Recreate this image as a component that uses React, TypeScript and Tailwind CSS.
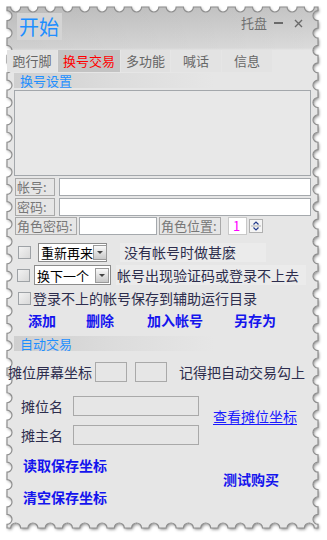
import React from "react";

const FONT = "font-['Noto_Sans_CJK_SC','Noto_Sans',sans-serif]";

// stamp-style frame: straight edges with round bites cut in
function stampPath(x0: number, y0: number, w: number, h: number, r: number, step: number) {
  const nx = Math.round(w / step);
  const ny = Math.round(h / step);
  const sx = w / nx;
  const sy = h / ny;
  const x1 = x0 + w;
  const y1 = y0 + h;
  let d = `M${x0},${y0}`;
  for (let i = 0; i < nx; i++) {
    const c = x0 + sx * (i + 0.5);
    d += ` L${c - r},${y0} A${r},${r} 0 0 0 ${c + r},${y0}`;
  }
  d += ` L${x1},${y0}`;
  for (let i = 0; i < ny; i++) {
    const c = y0 + sy * (i + 0.5);
    d += ` L${x1},${c - r} A${r},${r} 0 0 0 ${x1},${c + r}`;
  }
  d += ` L${x1},${y1}`;
  for (let i = nx - 1; i >= 0; i--) {
    const c = x0 + sx * (i + 0.5);
    d += ` L${c + r},${y1} A${r},${r} 0 0 0 ${c - r},${y1}`;
  }
  d += ` L${x0},${y1}`;
  for (let i = ny - 1; i >= 0; i--) {
    const c = y0 + sy * (i + 0.5);
    d += ` L${x0},${c + r} A${r},${r} 0 0 0 ${x0},${c - r}`;
  }
  return d + " Z";
}

const FRAME = stampPath(7, 7, 311, 521, 5, 17.3);

function Frame() {
  return (
    <svg className="absolute inset-0" width={327} height={540}>
      <defs>
        <linearGradient id="fill" gradientUnits="userSpaceOnUse" x1="0" y1="7" x2="0" y2="50">
          <stop offset="0" stopColor="#c5c5c5" />
          <stop offset="0.95" stopColor="#dadada" />
          <stop offset="1" stopColor="#e6e6e6" />
        </linearGradient>
        <linearGradient id="side" gradientUnits="userSpaceOnUse" x1="7" y1="0" x2="318" y2="0">
          <stop offset="0" stopColor="#000" stopOpacity="0.05" />
          <stop offset="1" stopColor="#000" stopOpacity="0" />
        </linearGradient>
        <clipPath id="clip">
          <path d={FRAME} />
        </clipPath>
        <filter id="sh" x="-5%" y="-5%" width="110%" height="110%">
          <feDropShadow dx="1" dy="1.5" stdDeviation="1.8" floodColor="#000" floodOpacity="0.45" />
        </filter>
      </defs>
      <path d={FRAME} fill="#e6e6e6" filter="url(#sh)" />
      <path d={FRAME} fill="url(#fill)" />
      <rect x="7" y="7" width="311" height="43" fill="url(#side)" clipPath="url(#clip)" />
      <path d={FRAME} fill="none" stroke="#8e8e8e" strokeWidth="1.2" />
    </svg>
  );
}

const tabs = [
  { label: "跑行脚", w: "w-[50px]", bg: "bg-[#e3e3e3]" },
  { label: "换号交易", w: "w-[62px]", bg: "bg-[#c3c3c3]", active: true },
  { label: "多功能", w: "w-[49px]", bg: "bg-[#e0e0e0]" },
  { label: "喊话", w: "w-[50px]", bg: "bg-[#e3e3e3]" },
  { label: "信息", w: "w-[50px]", bg: "bg-[#e3e3e3]" },
];

function SectionTitle({ text }: { text: string }) {
  return (
    <div className="ml-[7px] h-[15px] w-[200px] bg-gradient-to-r from-[#cfcfcf] via-[#dcdcdc] to-transparent pl-[6px] text-[13px] leading-[15px] text-[#1e8fff]">
      {text}
    </div>
  );
}

function Label({ text, w }: { text: string; w: string }) {
  return (
    <div className={`${w} h-full whitespace-nowrap border border-[#a9a9a9] pl-[1px] text-[13px] leading-[16px] text-[#777]`}>{text}</div>
  );
}

function Check() {
  return <div className="h-[13px] w-[13px] shrink-0 border border-[#9ea2a6] bg-gradient-to-br from-[#f2f2f2] to-[#d9d9d9]" />;
}

function Select({ text, w }: { text: string; w: string }) {
  return (
    <div className={`${w} flex h-full items-center border border-[#8c8c8c] bg-white pl-[2px] pr-[1px]`}>
      <span className="whitespace-nowrap text-[13px] leading-none text-black">{text}</span>
      <div className="ml-auto flex h-[15px] w-[14px] shrink-0 items-center justify-center border border-[#9a9a9a] bg-gradient-to-b from-[#fafafa] to-[#c8c8c8]">
        <div className="h-0 w-0 border-x-[3px] border-t-[3px] border-x-transparent border-t-[#444]" />
      </div>
    </div>
  );
}

function Blue({ text, cls }: { text: string; cls?: string }) {
  return <span className={`whitespace-nowrap text-[14px] font-bold leading-[18px] text-[#1414ee] ${cls ?? ""}`}>{text}</span>;
}

export default function App() {
  return (
    <div className={`relative h-[540px] w-[327px] overflow-hidden bg-white ${FONT}`}>
      <Frame />
      <div className="relative ml-[7px] mt-[7px] w-[311px]">
        {/* title bar */}
        <div className="flex h-[43px] items-start">
          <div className="ml-[10px] mt-[6px] flex h-[27px] w-[45px] items-center bg-[#d4d4d4] pl-[2px] text-[20px] leading-none text-[#1e8fff]">
            开始
          </div>
          <div className="ml-auto mr-[15px] mt-[7px] flex items-center text-[#707070]">
            <span className="text-[13px] leading-[18px]">托盘</span>
            <div className="ml-[7px] h-[2px] w-[9px] bg-[#6a6a6a]" />
            <svg className="ml-[11px]" width="9" height="9" viewBox="0 0 9 9">
              <path d="M1 1 L8 8 M8 1 L1 8" stroke="#6a6a6a" strokeWidth="1.4" />
            </svg>
          </div>
        </div>

        {/* tabs */}
        <div className="flex h-[22px] gap-[1px]">
          {tabs.map((t) => (
            <div
              key={t.label}
              className={`${t.w} ${t.bg} flex items-center justify-center text-[13px] ${t.active ? "text-[#ff0000]" : "text-[#666]"}`}
            >
              {t.label}
            </div>
          ))}
        </div>

        <div className="mt-[1px]">
          <SectionTitle text="换号设置" />
        </div>

        <div className="ml-[7px] mt-[2px] h-[86px] w-[297px] border border-[#a3a7ab] bg-[#e8e8e8]" />

        {/* account fields */}
        <div className="ml-[8px] mt-[2px] flex h-[18px] gap-[4px]">
          <Label text="帐号:" w="w-[40px]" />
          <div className="h-full w-[252px] border border-[#a5a9ad] bg-white" />
        </div>
        <div className="ml-[8px] mt-[2px] flex h-[18px] gap-[4px]">
          <Label text="密码:" w="w-[40px]" />
          <div className="h-full w-[252px] border border-[#a5a9ad] bg-white" />
        </div>
        <div className="ml-[8px] mt-[1px] flex h-[18px] items-center">
          <Label text="角色密码:" w="w-[62px]" />
          <div className="ml-[2px] h-full w-[78px] border border-[#a5a9ad] bg-white" />
          <div className="ml-[2px] h-full">
            <Label text="角色位置:" w="w-[62px]" />
          </div>
          <div className="ml-[7px] flex h-full w-[19px] items-center border border-[#c8c8c8] bg-white pl-[4px] text-[13px] text-[#ff00ff]">
            1
          </div>
          <div className="ml-[2px] flex h-[14px] w-[14px] flex-col border border-[#b0b0b0] bg-[#f4f4f4]">
            <svg width="12" height="12" viewBox="0 0 12 12">
              <path d="M3.5 4.5 L6 2 L8.5 4.5" fill="none" stroke="#223a8a" strokeWidth="1.2" />
              <path d="M1 6 H11" stroke="#b0b0b0" strokeWidth="1" />
              <path d="M3.5 7.5 L6 10 L8.5 7.5" fill="none" stroke="#223a8a" strokeWidth="1.2" />
            </svg>
          </div>
        </div>

        {/* options */}
        <div className="mt-[8px] flex h-[19px] items-center">
          <div className="ml-[11px]">
            <Check />
          </div>
          <div className="ml-[7px] h-full">
            <Select text="重新再来" w="w-[69px]" />
          </div>
          <div className="ml-[13px] flex h-full w-[146px] items-center bg-[#ebebeb] pl-[4px] text-[14px] text-[#2d2d4d]">
            没有帐号时做甚麽
          </div>
        </div>
        <div className="mt-[3px] flex h-[20px] items-center">
          <div className="ml-[10px]">
            <Check />
          </div>
          <div className="ml-[4px] h-full">
            <Select text="换下一个" w="w-[77px]" />
          </div>
          <div className="ml-[5px] flex h-full w-[190px] items-center bg-[#ebebeb] pl-[1px] text-[14px] text-[#2d2d4d]">
            帐号出现验证码或登录不上去
          </div>
        </div>
        <div className="mt-[5px] flex h-[17px] items-center">
          <div className="ml-[11px]">
            <Check />
          </div>
          <span className="ml-[2px] text-[14px] leading-[17px] text-[#2d2d4d]">登录不上的帐号保存到辅助运行目录</span>
        </div>

        {/* actions */}
        <div className="mt-[4px] flex h-[18px] items-center">
          <Blue text="添加" cls="ml-[21px]" />
          <Blue text="删除" cls="ml-[30px]" />
          <Blue text="加入帐号" cls="ml-[33px]" />
          <Blue text="另存为" cls="ml-[31px]" />
        </div>

        <div className="mt-[7px]">
          <SectionTitle text="自动交易" />
        </div>

        {/* auto trade */}
        <div className="mt-[11px] flex h-[20px] items-center">
          <span className="ml-[1px] text-[14px] text-[#2d2d4d]">摊位屏幕坐标</span>
          <div className="ml-[3px] h-full w-[32px] border border-[#a9a9a9] bg-[#e6e6e6]" />
          <div className="ml-[8px] h-full w-[32px] border border-[#a9a9a9] bg-[#e6e6e6]" />
          <span className="ml-[12px] text-[14px] text-[#2d2d4d]">记得把自动交易勾上</span>
        </div>

        <div className="mt-[14px] flex items-center">
          <div className="flex flex-col gap-[9px]">
            <div className="flex h-[20px] items-center">
              <span className="ml-[14px] text-[14px] text-[#2d2d4d]">摊位名</span>
              <div className="ml-[10px] h-full w-[126px] border border-[#a9a9a9] bg-[#e6e6e6]" />
            </div>
            <div className="flex h-[20px] items-center">
              <span className="ml-[14px] text-[14px] text-[#2d2d4d]">摊主名</span>
              <div className="ml-[10px] h-full w-[126px] border border-[#a9a9a9] bg-[#e6e6e6]" />
            </div>
          </div>
          <span className="mb-[9px] ml-[14px] text-[14px] leading-[20px] text-[#1a1aff] underline underline-offset-2">
            查看摊位坐标
          </span>
        </div>

        <div className="flex items-start">
          <div className="flex flex-col">
            <Blue text="读取保存坐标" cls="ml-[16px] mt-[11px]" />
            <Blue text="清空保存坐标" cls="ml-[16px] mt-[14px]" />
          </div>
          <Blue text="测试购买" cls="ml-[116px] mt-[25px]" />
        </div>
      </div>
    </div>
  );
}
